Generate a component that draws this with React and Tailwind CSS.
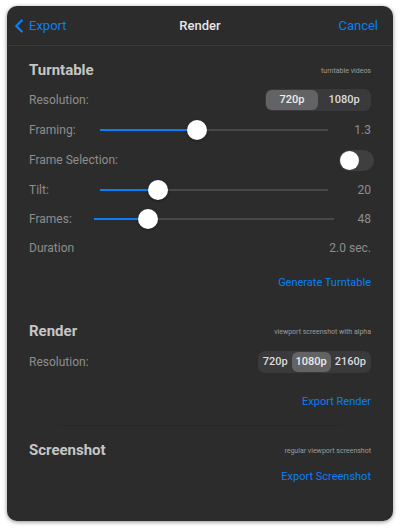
import { FiChevronLeft } from 'react-icons/fi';

const font = { fontFamily: 'Roboto, "Liberation Sans", sans-serif' };

function Segmented({ options, selected, itemClass = 'w-[52px]' }) {
  return (
    <div className="flex items-center rounded-[7px] bg-[#3a3a3c] p-[1px] h-[22px]">
      {options.map((o) => (
        <div
          key={o}
          className={`h-[20px] flex items-center justify-center rounded-[6px] text-[11px] font-medium ${itemClass} ${
            o === selected ? 'bg-[#636366] text-[#ececec]' : 'text-[#dcdcdc]'
          }`}
        >
          {o}
        </div>
      ))}
    </div>
  );
}

function Slider({ pct }) {
  return (
    <div className="relative flex-1 h-[20px] flex items-center">
      <div className="h-[2px] bg-[#0a7ff5]" style={{ width: `${pct}%` }} />
      <div className="h-[2px] flex-1 bg-[#48484a]" />
      <div
        className="absolute top-0 w-[20px] h-[20px] -ml-[10px] rounded-full bg-white shadow-[0_1px_3px_rgba(0,0,0,0.4)]"
        style={{ left: `${pct}%` }}
      />
    </div>
  );
}

function Heading({ title, note, className = '' }) {
  return (
    <div className={`flex items-center justify-between h-[29px] ${className}`}>
      <span className="text-[15px] font-bold text-[#c6c6c6]">{title}</span>
      <span className="text-[7px] text-[#9c9c9c] mt-[2px]">{note}</span>
    </div>
  );
}

function Action({ children, className = '' }) {
  return (
    <div className={`flex justify-end items-center h-[30px] text-[11px] text-[#0a7ff5] ${className}`}>
      {children}
    </div>
  );
}

export default function App() {
  return (
    <div className="w-[400px] h-[528px] bg-white pt-[6px] px-[7px]" style={font}>
      <div className="h-[515px] rounded-[10px] bg-[#2c2c2c] shadow-[0_1px_4px_rgba(0,0,0,0.45)] flex flex-col overflow-hidden">
        <div className="h-[40px] shrink-0 flex items-center justify-between px-[1px] border-b border-[#3b3b3b]">
          <div className="flex items-center text-[#0a7ff5] text-[13px] w-[100px]">
            <FiChevronLeft className="w-[22px] h-[22px] -mr-[1px]" strokeWidth={2.6} />
            <span>Export</span>
          </div>
          <span className="text-[13px] font-medium text-[#e6e6e6]">Render</span>
          <div className="w-[100px] flex justify-end pr-[14px] text-[13px] text-[#0a7ff5]">Cancel</div>
        </div>

        <div className="flex flex-col px-[22px] pt-[10px] text-[12px] text-[#8e8e8e]">
          <Heading title="Turntable" note="turntable videos" />
          <div className="flex items-center justify-between h-[30px]">
            <span>Resolution:</span>
            <Segmented options={['720p', '1080p']} selected="720p" />
          </div>
          <div className="flex items-center h-[30px]">
            <span className="w-[71px]">Framing:</span>
            <Slider pct={42.5} />
            <span className="w-[43px] text-right">1.3</span>
          </div>
          <div className="flex items-center justify-between h-[30px]">
            <span>Frame Selection:</span>
            <div className="w-[35px] h-[21px] rounded-full bg-[#3f3f41] p-[1px] mr-[-3px]">
              <div className="w-[19px] h-[19px] rounded-full bg-white" />
            </div>
          </div>
          <div className="flex items-center h-[29px]">
            <span className="w-[71px]">Tilt:</span>
            <Slider pct={25.4} />
            <span className="w-[43px] text-right">20</span>
          </div>
          <div className="flex items-center h-[29px]">
            <span className="w-[65px]">Frames:</span>
            <Slider pct={22.5} />
            <span className="w-[37px] text-right">48</span>
          </div>
          <div className="flex items-center justify-between h-[29px]">
            <span>Duration</span>
            <span>2.0 sec.</span>
          </div>
          <Action className="mt-[6px]">Generate Turntable</Action>

          <Heading title="Render" note="viewport screenshot with alpha" className="mt-[19px]" />
          <div className="flex items-center justify-between h-[30px] mt-[1px]">
            <span>Resolution:</span>
            <Segmented options={['720p', '1080p', '2160p']} selected="1080p" itemClass="px-[4px]" />
          </div>
          <Action className="mt-[10px]">Export Render</Action>

          <div className="mx-[28px] mt-[8px] h-px bg-[#282828]" />

          <Heading title="Screenshot" note="regular viewport screenshot" className="mt-[10px]" />
          <Action className="-mt-[3px]">Export Screenshot</Action>
        </div>
      </div>
    </div>
  );
}
